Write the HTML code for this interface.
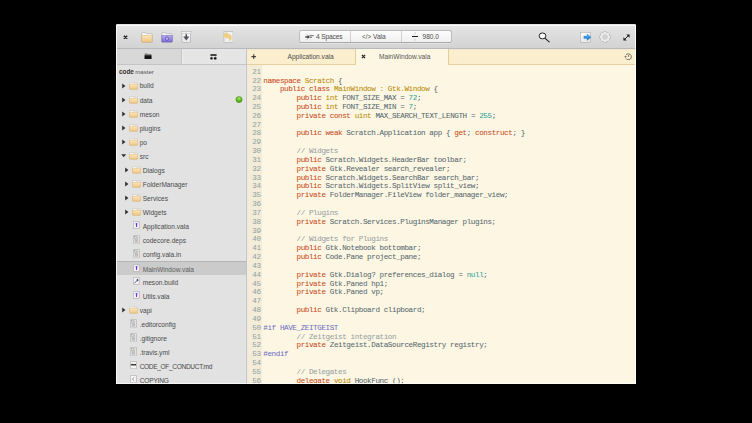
<!DOCTYPE html>
<html><head><meta charset="utf-8">
<style>
*{margin:0;padding:0;box-sizing:border-box}
html,body{width:752px;height:423px;background:#000;overflow:hidden}
body{position:relative;font-family:"Liberation Sans",sans-serif}
#win{position:absolute;left:116px;top:24px;width:520px;height:360px;overflow:hidden;background:#e2e2e2;border-radius:2px 2px 0 0}
#hdr{position:absolute;left:0;top:0;width:520px;height:25px;background:linear-gradient(#e2e2e2 0,#e2e2e2 1px,#fbfbfb 1px,#fbfbfb 2px,#e4e4e4 2px,#d3d3d3 100%);border-bottom:1px solid #b7b9bf}
#hl{position:absolute;left:0;top:0;width:520px;height:360px;pointer-events:none;box-shadow:inset 1px 0 0 rgba(255,255,255,0.85),inset -1px 0 0 rgba(255,255,255,0.85),inset 0 -1px 0 rgba(255,255,255,0.7)}
.abs{position:absolute}
#stabs{position:absolute;left:0;top:25px;width:130px;height:16px;border-bottom:1px solid #c4c4c4}
#stab1{position:absolute;left:0;top:0;width:66px;height:15px;background:#d8d8d8;border-right:1px solid #c6c6c6}
#stab2{position:absolute;left:66px;top:0;width:64px;height:15px;background:#e5e5e5;box-shadow:inset 1px 0 0 #ededed}
#sidebar{position:absolute;left:0;top:41px;width:130px;height:319px;overflow:hidden;background:#e2e2e2;box-shadow:inset -1px 0 0 #e7e7e9}
#sbord{position:absolute;left:130px;top:25px;width:1px;height:335px;background:#bfc2c7}
.row{position:absolute;left:0;width:130px;height:14.06px;line-height:14.06px;font-size:6.6px;color:#4a4a4a}
.row.sel{background:#cbcbcb;border-top:0.6px solid #b5b5b5;color:#5e5e5e}
.row svg,.row .ico{position:absolute}
.ex{top:4px}
.ico{top:3.4px;line-height:0}
.fico{top:3px}
.nm{position:absolute;top:0.9px;white-space:nowrap}
.dot{position:absolute;left:119.3px;top:3.6px;width:6.5px;height:6.5px;border-radius:50%;background:radial-gradient(circle at 50% 30%,#9be85a,#58b51c 60%,#3f9a12);box-shadow:0 0 0 0.5px #4f8f28}
#etabs{position:absolute;left:131px;top:25px;width:389px;height:16px;background:linear-gradient(#f1e6c9,#fcefcf 2px,#fbeecd);border-bottom:1px solid #e6d29c}
#atab{position:absolute;left:108px;top:0;width:94px;height:16px;background:#fdf6e3;border-left:1px solid #e2cf98;border-right:1px solid #e2cf98}
#editor{position:absolute;left:131px;top:41px;width:389px;height:319px;background:#fdf6e3;overflow:hidden}
#gutter{position:absolute;left:0;top:0;width:15px;height:319px;background:#f3ecd9}
.code{position:absolute;font-family:"Liberation Mono",monospace;font-size:7.6px;letter-spacing:-0.406px;line-height:8.83px;-webkit-text-stroke:0.03px currentColor;white-space:pre;color:#52676e}
#gnum{left:0;width:13.6px;text-align:right;color:#93a1a1}
#ctext{left:16.3px}
.k{color:#c64614}.t{color:#b58900}.n{color:#2aa198}.c{color:#93a1a1}.p{color:#6c71c4}
.lbl{position:absolute;font-size:6.6px;color:#4c4c4c;white-space:nowrap;line-height:8px}
#grp{position:absolute;left:183px;top:6px;width:153px;height:13.4px;border:1px solid #bcbcbc;border-bottom-color:#a9a9a9;border-radius:2.5px;background:linear-gradient(#fdfdfd,#f0f0f0);box-shadow:0 0.5px 0 rgba(255,255,255,0.6)}
.gsep{position:absolute;top:0;width:1px;height:11px;background:#cfcfcf}
</style></head><body>
<div id="win">
 <div id="hdr">
  <svg class="abs" style="left:6.5px;top:10.5px" width="5" height="4.6" viewBox="0 0 5 5" preserveAspectRatio="none"><path d="M0.8 0.8 L4.2 4.2 M4.2 0.8 L0.8 4.2" stroke="#1e1e1e" stroke-width="1.35" stroke-linecap="butt"/></svg>
  <!-- folder open -->
  <svg class="abs" style="left:25px;top:7.6px" width="12" height="11" viewBox="0 0 24 22"><defs><linearGradient id="fg" x1="0" y1="0" x2="0" y2="1"><stop offset="0" stop-color="#fbe6bd"/><stop offset="1" stop-color="#f1c683"/></linearGradient><linearGradient id="pg" x1="0" y1="0" x2="0" y2="1"><stop offset="0" stop-color="#bab2ec"/><stop offset="1" stop-color="#7d6cd6"/></linearGradient><linearGradient id="dg" x1="0" y1="0" x2="0" y2="1"><stop offset="0" stop-color="#fdfdfd"/><stop offset="1" stop-color="#e8e8e8"/></linearGradient></defs>
   <path d="M1.5 3 Q1.5 1.4 3.2 1.4 H9 L10.8 3.4 H20.8 Q22.5 3.4 22.5 5 V19 Q22.5 20.2 21.2 20.2 H2.8 Q1.5 20.2 1.5 19 Z" fill="#ffffff" stroke="#a9a59c" stroke-width="1.2"/>
   <path d="M1.5 7 H22.5 V18.8 Q22.5 20.2 21 20.2 H3 Q1.5 20.2 1.5 18.8 Z" fill="url(#fg)" stroke="#d4ad6c" stroke-width="1"/>
  </svg>
  <!-- folder purple -->
  <svg class="abs" style="left:44.8px;top:7.6px" width="12" height="11" viewBox="0 0 24 22">
   <path d="M1.5 3 Q1.5 1.4 3.2 1.4 H9 L10.8 3.4 H20.8 Q22.5 3.4 22.5 5 V19 Q22.5 20.2 21.2 20.2 H2.8 Q1.5 20.2 1.5 19 Z" fill="#f8f8f8" stroke="#a4a4ac" stroke-width="1.2"/>
   <path d="M1.5 7 H22.5 V18.8 Q22.5 20.2 21 20.2 H3 Q1.5 20.2 1.5 18.8 Z" fill="url(#pg)" stroke="#6250b0" stroke-width="1"/>
   <circle cx="12" cy="13.4" r="3.6" fill="#9d92e0" stroke="#5d4fae" stroke-width="1.3"/><path d="M11 11.6 L14 13.4 L11 15.2Z" fill="#f0eeff" opacity="0.8"/>
  </svg>
  <!-- download doc -->
  <svg class="abs" style="left:65px;top:6.8px" width="10.5" height="12.2" viewBox="0 0 21 24.4">
   <rect x="2" y="1" width="17" height="22.4" fill="url(#dg)" stroke="#a4a4a4" stroke-width="1.1"/>
   <rect x="0.8" y="0.8" width="19.4" height="4.4" fill="#f6f6f6" stroke="#b0b0b0" stroke-width="1"/>
   <path d="M10.5 1 V5" stroke="#b8b8b8" stroke-width="1"/>
   <path d="M10.5 7.6 V13" stroke="#4c515c" stroke-width="3.2" stroke-linecap="round"/><path d="M5.2 11.6 H15.8 L10.5 18.6 Z" fill="#4c515c" stroke="#4c515c" stroke-width="0.8" stroke-linejoin="round"/>
  </svg>
  <!-- revert -->
  <svg class="abs" style="left:106.5px;top:6.8px" width="10.6" height="12" viewBox="0 0 21.2 24">
   <rect x="2" y="1" width="18" height="22" fill="#f0f0f0" stroke="#b4b4b4" stroke-width="1.3"/>
   <path d="M0.8 8.6 L7.5 3.2 V6.2 Q16.5 6.2 16.5 13.5 Q16.4 17 13.8 19.4 Q14.6 12.5 7.5 12 V14.6 Z" fill="#f4d27a" stroke="#dfb04a" stroke-width="0.9"/>
  </svg>
  <div id="grp">
   <div class="gsep" style="left:50px"></div><div class="gsep" style="left:100.5px"></div>
   <svg class="abs" style="left:4.6px;top:1.6px" width="9" height="8.4" viewBox="0 0 18 16.8"><path d="M1 2.6h4.6M1 13.6h4.6M10 1v2.4M10 13v2.8" stroke="#b0b0b0" stroke-width="0.8"/><path d="M1 6.8 H5.5 V4.6 L9 7.8 L5.5 11 V8.8 H1Z" fill="#2a2a2a" stroke="#2a2a2a" stroke-width="0.6"/><path d="M10 5.4 H16.8" stroke="#2a2a2a" stroke-width="1.4" stroke-linecap="round"/><path d="M10 8.6 H13" stroke="#2a2a2a" stroke-width="1.4" stroke-linecap="round"/></svg>
   <span class="lbl" style="left:16px;top:2.2px;letter-spacing:-0.15px">4 Spaces</span>
   <span class="lbl" style="left:62px;top:2.2px;font-size:6.3px">&lt;/&gt;</span>
   <span class="lbl" style="left:73px;top:2.2px">Vala</span>
   <svg class="abs" style="left:112px;top:1px" width="6" height="9" viewBox="0 0 12 18"><path d="M0.4 9 H11.6" stroke="#1e1e1e" stroke-width="2.2" stroke-linecap="round"/><path d="M6 0.6 V2.4 M6 3.2 V5 M6 13 V14.8 M6 15.6 V17.4" stroke="#b4b4b4" stroke-width="1.6"/></svg>
   <span class="lbl" style="left:122.5px;top:2.2px">980.0</span>
  </div>
  <!-- search -->
  <svg class="abs" style="left:421.5px;top:7.5px" width="12" height="11" viewBox="0 0 24 22">
   <ellipse cx="9" cy="7.8" rx="6.8" ry="5.9" fill="#fafafa" stroke="#262626" stroke-width="2"/>
   <path d="M14.2 12.8 L22.4 19.8" stroke="#262626" stroke-width="2.4" stroke-linecap="round"/>
  </svg>
  <!-- export -->
  <svg class="abs" style="left:464px;top:8px;overflow:visible" width="11" height="11" viewBox="0 0 22 22"><defs><linearGradient id="bg1" x1="0" y1="0" x2="0" y2="1"><stop offset="0" stop-color="#5cc0f6"/><stop offset="1" stop-color="#1670c8"/></linearGradient></defs>
   <rect x="0.6" y="0.6" width="19.8" height="20.4" fill="url(#dg)" stroke="#a6a6a6" stroke-width="1.1"/>
   <path d="M7.6 8 H14 V3.6 L22.4 10.6 L14 17 V13.2 H7.6 Z" fill="url(#bg1)" stroke="#1a6fc0" stroke-width="0.5"/>
  </svg>
  <!-- gear -->
  <svg class="abs" style="left:482.8px;top:7px" width="12" height="12" viewBox="0 0 24 24">
   <path d="M20.42 8.83 L22.98 9.77 L22.98 14.23 L20.42 15.17 L20.20 15.71 L21.34 18.19 L18.19 21.34 L15.71 20.20 L15.17 20.42 L14.23 22.98 L9.77 22.98 L8.83 20.42 L8.29 20.20 L5.81 21.34 L2.66 18.19 L3.80 15.71 L3.58 15.17 L1.02 14.23 L1.02 9.77 L3.58 8.83 L3.80 8.29 L2.66 5.81 L5.81 2.66 L8.29 3.80 L8.83 3.58 L9.77 1.02 L14.23 1.02 L15.17 3.58 L15.71 3.80 L18.19 2.66 L21.34 5.81 L20.20 8.29Z" fill="#eeeeee" stroke="#aaaaaa" stroke-width="1.1" stroke-linejoin="round"/>
   <circle cx="12" cy="12" r="5" fill="#e4e4e4" stroke="#b4b4b4" stroke-width="1"/>
   <circle cx="12" cy="12" r="2.2" fill="none" stroke="#a8a8a8" stroke-width="1"/>
  </svg>
  <!-- maximize -->
  <svg class="abs" style="left:507.2px;top:9.8px" width="7" height="7" viewBox="0 0 14 14">
   <path d="M3.5 10.5 L10.5 3.5" stroke="#1e1e1e" stroke-width="2"/><path d="M6.5 0.8 H13.2 V7.5Z M0.8 6.5 V13.2 H7.5Z" fill="#1e1e1e"/>
  </svg>
 </div>
 <div id="stabs">
  <div id="stab1"></div><div id="stab2"></div>
  <svg class="abs" style="left:28px;top:3.8px" width="8" height="6.6" viewBox="0 0 16 13.2"><path d="M1.2 3 Q1.2 1 3 1 H6.5 L7.5 2 H13.5 Q15 2 15 3.5 V5 H1.2Z" fill="#6a6a6a"/><path d="M1.2 4.2 Q4 3.4 8 3.4 Q12 3.4 15 4.2" fill="none" stroke="#bdbdbd" stroke-width="0.8"/><rect x="1" y="4.6" width="14.2" height="7.8" rx="0.8" fill="#141414"/></svg>
  <svg class="abs" style="left:94px;top:4.6px" width="7.2" height="6" viewBox="0 0 14.4 12"><rect x="0.6" y="0.4" width="12.8" height="3.2" rx="1.2" fill="#111"/><path d="M3 3.6 V6 M11 3.6 V6" stroke="#555" stroke-width="0.6"/><rect x="0.6" y="6.6" width="4.8" height="4.4" rx="1.4" fill="#111"/><rect x="7.6" y="6.6" width="5.6" height="4.4" rx="1.4" fill="#111"/></svg>
 </div>
 <div id="sbord"></div>
 <div id="etabs">
  <svg class="abs" style="left:3.8px;top:4.8px" width="5.6" height="5.4" viewBox="0 0 11 11"><path d="M5.5 0.5V10.5M0.5 5.5H10.5" stroke="#252525" stroke-width="2"/></svg>
  <span class="lbl" style="left:40.5px;top:3.8px">Application.vala</span>
  <div id="atab">
   <svg class="abs" style="left:4.6px;top:4.9px" width="5" height="5" viewBox="0 0 5 5"><path d="M0.9 0.9 L4.1 4.1 M4.1 0.9 L0.9 4.1" stroke="#262626" stroke-width="1.25" stroke-linecap="butt"/></svg>
   <span class="lbl" style="left:23px;top:3.8px;color:#585858">MainWindow.vala</span>
  </div>
  <svg class="abs" style="left:376.6px;top:3.6px" width="8.6" height="7.6" viewBox="0 0 17 15"><path d="M3.6 4.4 A5.9 5.9 0 1 1 3.6 10.6" fill="none" stroke="#4a4a4a" stroke-width="1.5"/><path d="M0.6 6.2 L5.6 6.2 L3.1 9.4Z" fill="#4a4a4a"/><path d="M9 4 V7.8" fill="none" stroke="#4a4a4a" stroke-width="1.4"/></svg>
 </div>
 <div id="sidebar">
  <div class="row" style="top:-0.5px;left:0;line-height:14px"><span class="nm" style="left:3px;font-weight:bold;color:#333;font-size:6.4px">code</span><span class="nm" style="left:19.2px;color:#555;font-size:6.1px">master</span></div>
<div class="row" style="top:13.60px"><svg class="ex" style="left:6.00px" width="4" height="6" viewBox="0 0 4 6"><path d="M0.2 0.4 L3.4 3 L0.2 5.6Z" fill="#2e2e2e"/></svg><span class="ico" style="left:13.00px"><svg class="fi" width="9.2" height="7.6" viewBox="0 0 18.4 15.2"><path d="M1 2.2 Q1 0.8 2.4 0.8 H6.6 L8 2.2 H16 Q17.4 2.2 17.4 3.6 V13.2 Q17.4 14.4 16.2 14.4 H2.2 Q1 14.4 1 13.2 Z" fill="#fbfbfb" stroke="#bcb6aa" stroke-width="1"/><path d="M1 4.6 H17.4 V13.1 Q17.4 14.4 16.1 14.4 H2.3 Q1 14.4 1 13.1 Z" fill="url(#fg)" stroke="#d8b373" stroke-width="1"/></svg></span><span class="nm" style="left:23.70px">build</span></div>
<div class="row" style="top:27.61px"><svg class="ex" style="left:6.00px" width="4" height="6" viewBox="0 0 4 6"><path d="M0.2 0.4 L3.4 3 L0.2 5.6Z" fill="#2e2e2e"/></svg><span class="ico" style="left:13.00px"><svg class="fi" width="9.2" height="7.6" viewBox="0 0 18.4 15.2"><path d="M1 2.2 Q1 0.8 2.4 0.8 H6.6 L8 2.2 H16 Q17.4 2.2 17.4 3.6 V13.2 Q17.4 14.4 16.2 14.4 H2.2 Q1 14.4 1 13.2 Z" fill="#fbfbfb" stroke="#bcb6aa" stroke-width="1"/><path d="M1 4.6 H17.4 V13.1 Q17.4 14.4 16.1 14.4 H2.3 Q1 14.4 1 13.1 Z" fill="url(#fg)" stroke="#d8b373" stroke-width="1"/></svg></span><span class="nm" style="left:23.70px">data</span><svg style="left:118.5px;top:3.5px" width="8" height="8" viewBox="0 0 8 8"><defs><radialGradient id="gd" cx="0.5" cy="0.3" r="0.7"><stop offset="0" stop-color="#a6ee66"/><stop offset="0.6" stop-color="#5cb81f"/><stop offset="1" stop-color="#3f9a12"/></radialGradient></defs><circle cx="4" cy="3.6" r="3.05" fill="url(#gd)" stroke="#4c8e26" stroke-width="0.6"/></svg></div>
<div class="row" style="top:41.62px"><svg class="ex" style="left:6.00px" width="4" height="6" viewBox="0 0 4 6"><path d="M0.2 0.4 L3.4 3 L0.2 5.6Z" fill="#2e2e2e"/></svg><span class="ico" style="left:13.00px"><svg class="fi" width="9.2" height="7.6" viewBox="0 0 18.4 15.2"><path d="M1 2.2 Q1 0.8 2.4 0.8 H6.6 L8 2.2 H16 Q17.4 2.2 17.4 3.6 V13.2 Q17.4 14.4 16.2 14.4 H2.2 Q1 14.4 1 13.2 Z" fill="#fbfbfb" stroke="#bcb6aa" stroke-width="1"/><path d="M1 4.6 H17.4 V13.1 Q17.4 14.4 16.1 14.4 H2.3 Q1 14.4 1 13.1 Z" fill="url(#fg)" stroke="#d8b373" stroke-width="1"/></svg></span><span class="nm" style="left:23.70px">meson</span></div>
<div class="row" style="top:55.63px"><svg class="ex" style="left:6.00px" width="4" height="6" viewBox="0 0 4 6"><path d="M0.2 0.4 L3.4 3 L0.2 5.6Z" fill="#2e2e2e"/></svg><span class="ico" style="left:13.00px"><svg class="fi" width="9.2" height="7.6" viewBox="0 0 18.4 15.2"><path d="M1 2.2 Q1 0.8 2.4 0.8 H6.6 L8 2.2 H16 Q17.4 2.2 17.4 3.6 V13.2 Q17.4 14.4 16.2 14.4 H2.2 Q1 14.4 1 13.2 Z" fill="#fbfbfb" stroke="#bcb6aa" stroke-width="1"/><path d="M1 4.6 H17.4 V13.1 Q17.4 14.4 16.1 14.4 H2.3 Q1 14.4 1 13.1 Z" fill="url(#fg)" stroke="#d8b373" stroke-width="1"/></svg></span><span class="nm" style="left:23.70px">plugins</span></div>
<div class="row" style="top:69.64px"><svg class="ex" style="left:6.00px" width="4" height="6" viewBox="0 0 4 6"><path d="M0.2 0.4 L3.4 3 L0.2 5.6Z" fill="#2e2e2e"/></svg><span class="ico" style="left:13.00px"><svg class="fi" width="9.2" height="7.6" viewBox="0 0 18.4 15.2"><path d="M1 2.2 Q1 0.8 2.4 0.8 H6.6 L8 2.2 H16 Q17.4 2.2 17.4 3.6 V13.2 Q17.4 14.4 16.2 14.4 H2.2 Q1 14.4 1 13.2 Z" fill="#fbfbfb" stroke="#bcb6aa" stroke-width="1"/><path d="M1 4.6 H17.4 V13.1 Q17.4 14.4 16.1 14.4 H2.3 Q1 14.4 1 13.1 Z" fill="url(#fg)" stroke="#d8b373" stroke-width="1"/></svg></span><span class="nm" style="left:23.70px">po</span></div>
<div class="row" style="top:83.65px"><svg class="ex" style="left:5.00px;top:5.6px" width="6" height="4" viewBox="0 0 6 4"><path d="M0.3 0.2 H5.1 L2.7 3.2Z" fill="#2e2e2e"/></svg><span class="ico" style="left:13.00px"><svg class="fi" width="9.2" height="7.6" viewBox="0 0 18.4 15.2"><path d="M1 2.2 Q1 0.8 2.4 0.8 H6.6 L8 2.2 H16 Q17.4 2.2 17.4 3.6 V13.2 Q17.4 14.4 16.2 14.4 H2.2 Q1 14.4 1 13.2 Z" fill="#fbfbfb" stroke="#bcb6aa" stroke-width="1"/><path d="M1 4.6 H17.4 V13.1 Q17.4 14.4 16.1 14.4 H2.3 Q1 14.4 1 13.1 Z" fill="url(#fg)" stroke="#d8b373" stroke-width="1"/></svg></span><span class="nm" style="left:23.70px">src</span></div>
<div class="row" style="top:97.66px"><svg class="ex" style="left:9.00px" width="4" height="6" viewBox="0 0 4 6"><path d="M0.2 0.4 L3.4 3 L0.2 5.6Z" fill="#2e2e2e"/></svg><span class="ico" style="left:16.00px"><svg class="fi" width="9.2" height="7.6" viewBox="0 0 18.4 15.2"><path d="M1 2.2 Q1 0.8 2.4 0.8 H6.6 L8 2.2 H16 Q17.4 2.2 17.4 3.6 V13.2 Q17.4 14.4 16.2 14.4 H2.2 Q1 14.4 1 13.2 Z" fill="#fbfbfb" stroke="#bcb6aa" stroke-width="1"/><path d="M1 4.6 H17.4 V13.1 Q17.4 14.4 16.1 14.4 H2.3 Q1 14.4 1 13.1 Z" fill="url(#fg)" stroke="#d8b373" stroke-width="1"/></svg></span><span class="nm" style="left:26.70px">Dialogs</span></div>
<div class="row" style="top:111.67px"><svg class="ex" style="left:9.00px" width="4" height="6" viewBox="0 0 4 6"><path d="M0.2 0.4 L3.4 3 L0.2 5.6Z" fill="#2e2e2e"/></svg><span class="ico" style="left:16.00px"><svg class="fi" width="9.2" height="7.6" viewBox="0 0 18.4 15.2"><path d="M1 2.2 Q1 0.8 2.4 0.8 H6.6 L8 2.2 H16 Q17.4 2.2 17.4 3.6 V13.2 Q17.4 14.4 16.2 14.4 H2.2 Q1 14.4 1 13.2 Z" fill="#fbfbfb" stroke="#bcb6aa" stroke-width="1"/><path d="M1 4.6 H17.4 V13.1 Q17.4 14.4 16.1 14.4 H2.3 Q1 14.4 1 13.1 Z" fill="url(#fg)" stroke="#d8b373" stroke-width="1"/></svg></span><span class="nm" style="left:26.70px">FolderManager</span></div>
<div class="row" style="top:125.68px"><svg class="ex" style="left:9.00px" width="4" height="6" viewBox="0 0 4 6"><path d="M0.2 0.4 L3.4 3 L0.2 5.6Z" fill="#2e2e2e"/></svg><span class="ico" style="left:16.00px"><svg class="fi" width="9.2" height="7.6" viewBox="0 0 18.4 15.2"><path d="M1 2.2 Q1 0.8 2.4 0.8 H6.6 L8 2.2 H16 Q17.4 2.2 17.4 3.6 V13.2 Q17.4 14.4 16.2 14.4 H2.2 Q1 14.4 1 13.2 Z" fill="#fbfbfb" stroke="#bcb6aa" stroke-width="1"/><path d="M1 4.6 H17.4 V13.1 Q17.4 14.4 16.1 14.4 H2.3 Q1 14.4 1 13.1 Z" fill="url(#fg)" stroke="#d8b373" stroke-width="1"/></svg></span><span class="nm" style="left:26.70px">Services</span></div>
<div class="row" style="top:139.69px"><svg class="ex" style="left:9.00px" width="4" height="6" viewBox="0 0 4 6"><path d="M0.2 0.4 L3.4 3 L0.2 5.6Z" fill="#2e2e2e"/></svg><span class="ico" style="left:16.00px"><svg class="fi" width="9.2" height="7.6" viewBox="0 0 18.4 15.2"><path d="M1 2.2 Q1 0.8 2.4 0.8 H6.6 L8 2.2 H16 Q17.4 2.2 17.4 3.6 V13.2 Q17.4 14.4 16.2 14.4 H2.2 Q1 14.4 1 13.2 Z" fill="#fbfbfb" stroke="#bcb6aa" stroke-width="1"/><path d="M1 4.6 H17.4 V13.1 Q17.4 14.4 16.1 14.4 H2.3 Q1 14.4 1 13.1 Z" fill="url(#fg)" stroke="#d8b373" stroke-width="1"/></svg></span><span class="nm" style="left:26.70px">Widgets</span></div>
<div class="row" style="top:153.70px"><span class="ico" style="left:17.00px;top:2.63px"><svg class="fi" width="6.8" height="7.8" viewBox="0 0 13.6 15.6"><defs></defs><rect x="0.8" y="0.8" width="12" height="14.0" rx="0.6" fill="#f6f6f6" stroke="#9e9e9e" stroke-width="1.1"/><path d="M5.6 4.4 Q7.4 3.4 8.8 4.4 L8 11.8 Q6.9 12.6 6 11.8 Z" fill="#7433d8"/><path d="M3 5.6 Q4.8 4.2 6.4 4.4 M8 4.4 Q9.6 3.6 11 2.8" fill="none" stroke="#a77ee6" stroke-width="0.8"/></svg></span><span class="nm" style="left:26.70px">Application.vala</span></div>
<div class="row" style="top:167.71px"><span class="ico" style="left:17.00px;top:1.93px"><svg class="fi" width="6.8" height="9.2" viewBox="0 0 13.6 18.4"><defs></defs><rect x="0.8" y="0.8" width="12" height="16.799999999999997" rx="0.6" fill="#f6f6f6" stroke="#9e9e9e" stroke-width="1.1"/><rect x="3" y="3.4" width="3.2" height="3" fill="none" stroke="#8c8c8c" stroke-width="0.9"/><path d="M7 4h3.6M7 6h3.6M3 8.4h7.6M3 10.4h7.6M3 12.4h7.6M3 14.4h7.6" stroke="#7e7e7e" stroke-width="1"/></svg></span><span class="nm" style="left:26.70px">codecore.deps</span></div>
<div class="row" style="top:181.72px"><span class="ico" style="left:17.00px;top:1.93px"><svg class="fi" width="6.8" height="9.2" viewBox="0 0 13.6 18.4"><defs></defs><rect x="0.8" y="0.8" width="12" height="16.799999999999997" rx="0.6" fill="#f6f6f6" stroke="#9e9e9e" stroke-width="1.1"/><rect x="3" y="3.4" width="3.2" height="3" fill="none" stroke="#8c8c8c" stroke-width="0.9"/><path d="M7 4h3.6M7 6h3.6M3 8.4h7.6M3 10.4h7.6M3 12.4h7.6M3 14.4h7.6" stroke="#7e7e7e" stroke-width="1"/></svg></span><span class="nm" style="left:26.70px">config.vala.in</span></div>
<div class="row sel" style="top:195.73px"><span class="ico" style="left:17.00px;top:2.63px"><svg class="fi" width="6.8" height="7.8" viewBox="0 0 13.6 15.6"><defs></defs><rect x="0.8" y="0.8" width="12" height="14.0" rx="0.6" fill="#f6f6f6" stroke="#9e9e9e" stroke-width="1.1"/><path d="M5.6 4.4 Q7.4 3.4 8.8 4.4 L8 11.8 Q6.9 12.6 6 11.8 Z" fill="#7433d8"/><path d="M3 5.6 Q4.8 4.2 6.4 4.4 M8 4.4 Q9.6 3.6 11 2.8" fill="none" stroke="#a77ee6" stroke-width="0.8"/></svg></span><span class="nm" style="left:26.70px">MainWindow.vala</span></div>
<div class="row" style="top:209.74px"><span class="ico" style="left:17.00px;top:2.63px"><svg class="fi" width="6.8" height="7.8" viewBox="0 0 13.6 15.6"><defs></defs><rect x="0.8" y="0.8" width="12" height="14.0" rx="0.6" fill="#f6f6f6" stroke="#9e9e9e" stroke-width="1.1"/><path d="M3.2 12 L8.6 6.6" stroke="#34457a" stroke-width="1.8" stroke-linecap="round"/><path d="M7.2 4.6 Q9.6 2.8 11.2 4.6 L9.6 5.4 L10 7 L11.6 6.4 Q11 9 8.4 8.4Z" fill="#34457a"/></svg></span><span class="nm" style="left:26.70px">meson.build</span></div>
<div class="row" style="top:223.75px"><span class="ico" style="left:17.00px;top:2.63px"><svg class="fi" width="6.8" height="7.8" viewBox="0 0 13.6 15.6"><defs></defs><rect x="0.8" y="0.8" width="12" height="14.0" rx="0.6" fill="#f6f6f6" stroke="#9e9e9e" stroke-width="1.1"/><path d="M5.6 4.4 Q7.4 3.4 8.8 4.4 L8 11.8 Q6.9 12.6 6 11.8 Z" fill="#7433d8"/><path d="M3 5.6 Q4.8 4.2 6.4 4.4 M8 4.4 Q9.6 3.6 11 2.8" fill="none" stroke="#a77ee6" stroke-width="0.8"/></svg></span><span class="nm" style="left:26.70px">Utils.vala</span></div>
<div class="row" style="top:237.76px"><svg class="ex" style="left:6.00px" width="4" height="6" viewBox="0 0 4 6"><path d="M0.2 0.4 L3.4 3 L0.2 5.6Z" fill="#2e2e2e"/></svg><span class="ico" style="left:13.00px"><svg class="fi" width="9.2" height="7.6" viewBox="0 0 18.4 15.2"><path d="M1 2.2 Q1 0.8 2.4 0.8 H6.6 L8 2.2 H16 Q17.4 2.2 17.4 3.6 V13.2 Q17.4 14.4 16.2 14.4 H2.2 Q1 14.4 1 13.2 Z" fill="#fbfbfb" stroke="#bcb6aa" stroke-width="1"/><path d="M1 4.6 H17.4 V13.1 Q17.4 14.4 16.1 14.4 H2.3 Q1 14.4 1 13.1 Z" fill="url(#fg)" stroke="#d8b373" stroke-width="1"/></svg></span><span class="nm" style="left:23.70px">vapi</span></div>
<div class="row" style="top:251.77px"><span class="ico" style="left:14.00px;top:1.93px"><svg class="fi" width="6.8" height="9.2" viewBox="0 0 13.6 18.4"><defs></defs><rect x="0.8" y="0.8" width="12" height="16.799999999999997" rx="0.6" fill="#f6f6f6" stroke="#9e9e9e" stroke-width="1.1"/><rect x="3" y="3.4" width="3.2" height="3" fill="none" stroke="#8c8c8c" stroke-width="0.9"/><path d="M7 4h3.6M7 6h3.6M3 8.4h7.6M3 10.4h7.6M3 12.4h7.6M3 14.4h7.6" stroke="#7e7e7e" stroke-width="1"/></svg></span><span class="nm" style="left:23.70px">.editorconfig</span></div>
<div class="row" style="top:265.78px"><span class="ico" style="left:14.00px;top:1.93px"><svg class="fi" width="6.8" height="9.2" viewBox="0 0 13.6 18.4"><defs></defs><rect x="0.8" y="0.8" width="12" height="16.799999999999997" rx="0.6" fill="#f6f6f6" stroke="#9e9e9e" stroke-width="1.1"/><rect x="3" y="3.4" width="3.2" height="3" fill="none" stroke="#8c8c8c" stroke-width="0.9"/><path d="M7 4h3.6M7 6h3.6M3 8.4h7.6M3 10.4h7.6M3 12.4h7.6M3 14.4h7.6" stroke="#7e7e7e" stroke-width="1"/></svg></span><span class="nm" style="left:23.70px">.gitignore</span></div>
<div class="row" style="top:279.79px"><span class="ico" style="left:14.00px;top:1.93px"><svg class="fi" width="6.8" height="9.2" viewBox="0 0 13.6 18.4"><defs></defs><rect x="0.8" y="0.8" width="12" height="16.799999999999997" rx="0.6" fill="#f6f6f6" stroke="#9e9e9e" stroke-width="1.1"/><rect x="3" y="3.4" width="3.2" height="3" fill="none" stroke="#8c8c8c" stroke-width="0.9"/><path d="M7 4h3.6M7 6h3.6M3 8.4h7.6M3 10.4h7.6M3 12.4h7.6M3 14.4h7.6" stroke="#7e7e7e" stroke-width="1"/></svg></span><span class="nm" style="left:23.70px">.travis.yml</span></div>
<div class="row" style="top:293.80px"><span class="ico" style="left:14.00px;top:2.43px"><svg class="fi" width="6.8" height="8.2" viewBox="0 0 13.6 16.4"><defs></defs><rect x="0.8" y="0.8" width="12" height="14.799999999999999" rx="0.6" fill="#f6f6f6" stroke="#9e9e9e" stroke-width="1.1"/><path d="M1.5 6.8 Q4 5 6.5 5.8 Q9 6.8 12 5.6 V9 H1.5Z" fill="#3c3c3c"/></svg></span><span class="nm" style="left:23.70px;letter-spacing:-0.36px">CODE_OF_CONDUCT.md</span></div>
<div class="row" style="top:307.81px"><span class="ico" style="left:14.00px;top:2.43px"><svg class="fi" width="6.8" height="8.2" viewBox="0 0 13.6 16.4"><defs></defs><rect x="0.8" y="0.8" width="12" height="14.799999999999999" rx="0.6" fill="#f6f6f6" stroke="#9e9e9e" stroke-width="1.1"/><path d="M8.4 5 L4.6 8.2 L8.4 11.4" fill="none" stroke="#7a7a7a" stroke-width="1.5"/></svg></span><span class="nm" style="left:23.70px;letter-spacing:-0.2px">COPYING</span></div>
 </div>
 <div id="editor">
  <div id="gutter"></div>
  <div class="code" id="gnum" style="top:2.7px"><div class="ln">21</div><div class="ln">22</div><div class="ln">23</div><div class="ln">24</div><div class="ln">25</div><div class="ln">26</div><div class="ln">27</div><div class="ln">28</div><div class="ln">29</div><div class="ln">30</div><div class="ln">31</div><div class="ln">32</div><div class="ln">33</div><div class="ln">34</div><div class="ln">35</div><div class="ln">36</div><div class="ln">37</div><div class="ln">38</div><div class="ln">39</div><div class="ln">40</div><div class="ln">41</div><div class="ln">42</div><div class="ln">43</div><div class="ln">44</div><div class="ln">45</div><div class="ln">46</div><div class="ln">47</div><div class="ln">48</div><div class="ln">49</div><div class="ln">50</div><div class="ln">51</div><div class="ln">52</div><div class="ln">53</div><div class="ln">54</div><div class="ln">55</div><div class="ln">56</div></div>
  <div class="code" id="ctext" style="top:2.7px"><div class="ln"> </div><div class="ln"><span class="k">namespace</span> <span class="t">Scratch</span> {</div><div class="ln">    <span class="k">public</span> <span class="k">class</span> <span class="t">MainWindow : Gtk.Window</span> {</div><div class="ln">        <span class="k">public</span> <span class="t">int</span> FONT_SIZE_MAX = <span class="n">72</span>;</div><div class="ln">        <span class="k">public</span> <span class="t">int</span> FONT_SIZE_MIN = <span class="n">7</span>;</div><div class="ln">        <span class="k">private</span> <span class="k">const</span> <span class="t">uint</span> MAX_SEARCH_TEXT_LENGTH = <span class="n">255</span>;</div><div class="ln"> </div><div class="ln">        <span class="k">public</span> <span class="k">weak</span> Scratch.Application app { <span class="k">get</span>; <span class="k">construct</span>; }</div><div class="ln"> </div><div class="ln">        <span class="c">// Widgets</span></div><div class="ln">        <span class="k">public</span> Scratch.Widgets.HeaderBar toolbar;</div><div class="ln">        <span class="k">private</span> Gtk.Revealer search_revealer;</div><div class="ln">        <span class="k">public</span> Scratch.Widgets.SearchBar search_bar;</div><div class="ln">        <span class="k">public</span> Scratch.Widgets.SplitView split_view;</div><div class="ln">        <span class="k">private</span> FolderManager.FileView folder_manager_view;</div><div class="ln"> </div><div class="ln">        <span class="c">// Plugins</span></div><div class="ln">        <span class="k">private</span> Scratch.Services.PluginsManager plugins;</div><div class="ln"> </div><div class="ln">        <span class="c">// Widgets for Plugins</span></div><div class="ln">        <span class="k">public</span> Gtk.Notebook bottombar;</div><div class="ln">        <span class="k">public</span> Code.Pane project_pane;</div><div class="ln"> </div><div class="ln">        <span class="k">private</span> Gtk.Dialog? preferences_dialog = <span class="n">null</span>;</div><div class="ln">        <span class="k">private</span> Gtk.Paned hp1;</div><div class="ln">        <span class="k">private</span> Gtk.Paned vp;</div><div class="ln"> </div><div class="ln">        <span class="k">public</span> Gtk.Clipboard clipboard;</div><div class="ln"> </div><div class="ln"><span class="p">#if HAVE_ZEITGEIST</span></div><div class="ln">        <span class="c">// Zeitgeist integration</span></div><div class="ln">        <span class="k">private</span> Zeitgeist.DataSourceRegistry registry;</div><div class="ln"><span class="p">#endif</span></div><div class="ln"> </div><div class="ln">        <span class="c">// Delegates</span></div><div class="ln">        <span class="k">delegate</span> <span class="t">void</span> HookFunc ();</div></div>
 </div>
<div id="hl"></div>
</div>
</body></html>
